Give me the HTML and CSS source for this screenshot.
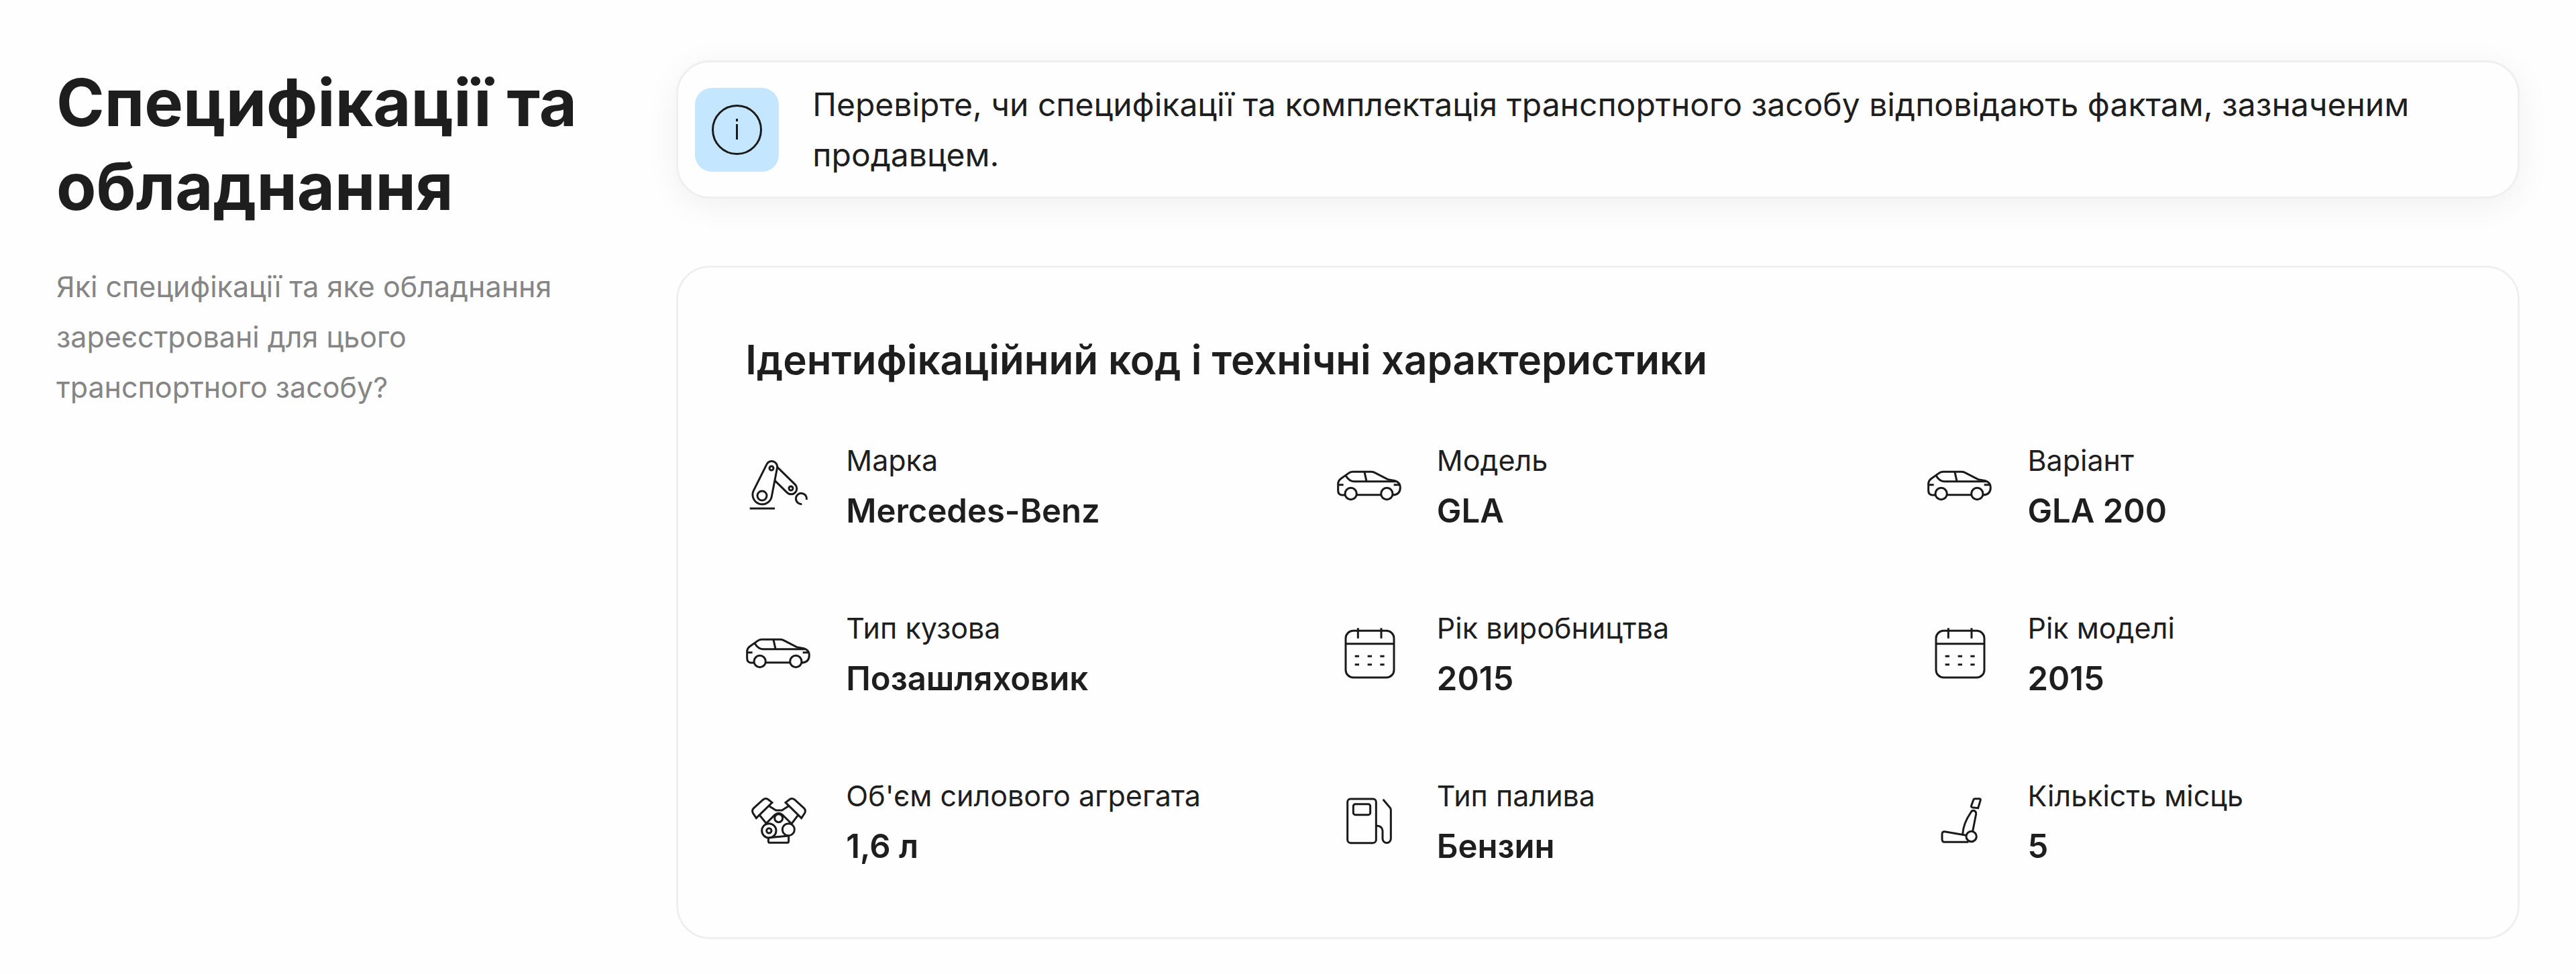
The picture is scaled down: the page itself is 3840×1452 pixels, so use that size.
FILE: index.html
```html
<!DOCTYPE html>
<html lang="uk">
<head>
    <meta charset="UTF-8">
    <meta name="viewport" content="width=device-width, initial-scale=1.0">
    <title>Специфікації та обладнання</title>
    <link rel="stylesheet" href="styles.css">
</head>
<body>
    <!-- shared icons -->
    <svg class="sprite" aria-hidden="true">
        <symbol id="icon-robot" viewBox="0 0 300 300">
            <path d="M20 252H132"/>
            <path d="M94 58L37 172A43 43 0 1 0 117 203L142 74A25 25 0 0 0 94 58Z"/>
            <circle cx="75" cy="195" r="21"/>
            <circle cx="117" cy="72" r="9"/>
            <path d="M141 65L223 145A25 25 0 0 1 187 181L132 127"/>
            <circle cx="204" cy="162" r="9"/>
            <path d="M274 213A24 24 0 1 0 253 232"/>
        </symbol>
        <symbol id="icon-car" viewBox="0 0 300 300">
            <path d="M40 192H24Q8 190 8 172V138Q10 126 22 118L54 95Q62 88 74 88H154Q164 88 172 92L230 122L262 128Q286 136 286 158Q286 190 252 192M91 191H200"/>
            <path d="M42 105Q58 131 78 131H266M126 89L135 130M8 146H32M257 146H285"/>
            <circle cx="65" cy="186" r="26"/>
            <circle cx="226" cy="186" r="26"/>
        </symbol>
        <symbol id="icon-calendar" viewBox="0 0 300 300">
            <rect x="42" y="49" width="216" height="209" rx="34"/>
            <path d="M42 107H258M97 37V83M201 37V83"/>
            <path d="M83 163H102M140 163H159M196 163H215M83 200H102M140 200H159M196 200H215"/>
        </symbol>
        <symbol id="icon-engine" viewBox="0 0 300 300">
            <path d="M120 67L100 52Q90 46 80 54L38 92Q28 102 34 114L49 137Z"/>
            <path d="M180 67L200 52Q210 46 220 54L262 92Q272 102 266 114L251 137Z"/>
            <path d="M107 83L137 102H164L193 83M65 125L95 162M235 125L207 162"/>
            <path d="M94 160L132 122Q149 108 166 122L207 162"/>
            <circle cx="149" cy="137" r="18"/>
            <circle cx="106" cy="193" r="32"/>
            <circle cx="106" cy="193" r="11"/>
            <circle cx="193" cy="188" r="27"/>
            <path d="M103 225V239Q103 247 111 247H186Q194 247 194 239V216M106 224L194 216"/>
        </symbol>
        <symbol id="icon-fuel" viewBox="0 0 300 300">
            <rect x="50" y="51" width="128" height="197" rx="14"/>
            <rect x="76" y="74" width="76" height="48" rx="9"/>
            <path d="M209 53L241 91Q244 95 244 101V229A18 18 0 0 1 207 229V193Q205 171 178 171"/>
        </symbol>
        <symbol id="icon-seat" viewBox="0 0 300 300">
            <path d="M216 50H236Q242 50 241 56L230 92L204 89Q198 87 200 81L209 56Q211 50 216 50Z"/>
            <path d="M161 209Q164 160 198 111Q202 103 209 103Q222 105 221 119L206 196"/>
            <path d="M177 214L81 197Q69 196 69 210V230Q69 244 81 244H187"/>
            <circle cx="200" cy="219" r="23"/>
        </symbol>
    </svg>

    <section class="specs">
        <div class="intro">
            <h1>Специфікації та обладнання</h1>
            <p>Які специфікації та яке обладнання зареєстровані для цього транспортного засобу?</p>
        </div>

        <div class="content">
            <div class="notice">
                <div class="notice-icon">
                    <svg viewBox="0 0 75 75" aria-hidden="true">
                        <circle cx="37.5" cy="37.5" r="36"/>
                        <path d="M37.5 21V25M37.5 29V52"/>
                    </svg>
                </div>
                <p>Перевірте, чи специфікації та комплектація транспортного засобу відповідають фактам, зазначеним продавцем.</p>
            </div>

            <div class="card">
                <h2>Ідентифікаційний код і технічні характеристики</h2>
                <dl class="grid">
                    <div class="item">
                        <svg class="icon" aria-hidden="true"><use href="#icon-robot"/></svg>
                        <div>
                            <dt>Марка</dt>
                            <dd>Mercedes-Benz</dd>
                        </div>
                    </div>
                    <div class="item">
                        <svg class="icon" aria-hidden="true"><use href="#icon-car"/></svg>
                        <div>
                            <dt>Модель</dt>
                            <dd>GLA</dd>
                        </div>
                    </div>
                    <div class="item">
                        <svg class="icon" aria-hidden="true"><use href="#icon-car"/></svg>
                        <div>
                            <dt>Варіант</dt>
                            <dd>GLA 200</dd>
                        </div>
                    </div>
                    <div class="item">
                        <svg class="icon" aria-hidden="true"><use href="#icon-car"/></svg>
                        <div>
                            <dt>Тип кузова</dt>
                            <dd>Позашляховик</dd>
                        </div>
                    </div>
                    <div class="item">
                        <svg class="icon" aria-hidden="true"><use href="#icon-calendar"/></svg>
                        <div>
                            <dt>Рік виробництва</dt>
                            <dd>2015</dd>
                        </div>
                    </div>
                    <div class="item">
                        <svg class="icon" aria-hidden="true"><use href="#icon-calendar"/></svg>
                        <div>
                            <dt>Рік моделі</dt>
                            <dd>2015</dd>
                        </div>
                    </div>
                    <div class="item">
                        <svg class="icon" aria-hidden="true"><use href="#icon-engine"/></svg>
                        <div>
                            <dt>Об'єм силового агрегата</dt>
                            <dd>1,6 л</dd>
                        </div>
                    </div>
                    <div class="item">
                        <svg class="icon" aria-hidden="true"><use href="#icon-fuel"/></svg>
                        <div>
                            <dt>Тип палива</dt>
                            <dd>Бензин</dd>
                        </div>
                    </div>
                    <div class="item">
                        <svg class="icon" aria-hidden="true"><use href="#icon-seat"/></svg>
                        <div>
                            <dt>Кількість місць</dt>
                            <dd>5</dd>
                        </div>
                    </div>
                </dl>
            </div>
        </div>
    </section>
</body>
</html>
```
FILE: styles.css
```css
* {
    box-sizing: border-box;
}
body {
    margin: 0;
    font-family: Inter, "Liberation Sans", sans-serif;
    color: #1e1e1e;
    background-color: #fefefe;
}
h1, h2, p, dl, dd {
    margin: 0;
}
.sprite {
    display: none;
}
.specs {
    display: grid;
    grid-template-columns: 3fr 10fr;
    gap: 100px;
    padding: 90px 84px 50px;
}
.intro h1 {
    margin-bottom: 50px;
    font-size: 97px;
    font-weight: 700;
    line-height: 125px;
}
.intro p {
    font-size: 43px;
    line-height: 75px;
    color: #858585;
}
.notice {
    display: flex;
    align-items: center;
    gap: 50px;
    margin-bottom: 100px;
    padding: 25px;
    border: 3px solid #efefef;
    border-radius: 50px;
    background-color: #fefefe;
    box-shadow: 0 10px 50px rgba(0, 0, 0, 0.06);
}
.notice p {
    font-size: 48px;
    line-height: 75px;
}
.notice-icon {
    display: flex;
    flex: none;
    align-items: center;
    justify-content: center;
    width: 125px;
    height: 125px;
    border-radius: 25px;
    background-color: #c4e6ff;
}
.notice-icon svg {
    width: 75px;
    height: 75px;
    fill: none;
    stroke: #1a1a1a;
    stroke-width: 3;
}
.card {
    padding: 100px 100px 98px;
    border: 3px solid #efefef;
    border-radius: 50px;
}
.card h2 {
    margin-bottom: 75px;
    font-size: 60px;
    font-weight: 600;
    line-height: 75px;
}
.grid {
    display: grid;
    grid-template-columns: repeat(3, 1fr);
    gap: 100px;
}
.item {
    display: flex;
    align-items: center;
    gap: 50px;
}
.icon {
    flex: none;
    width: 100px;
    height: 100px;
    fill: none;
    stroke: #1a1a1a;
    stroke-width: 9;
}
.item dt {
    font-size: 43px;
    line-height: 75px;
}
.item dd {
    font-size: 49px;
    font-weight: 600;
    line-height: 75px;
}
```
